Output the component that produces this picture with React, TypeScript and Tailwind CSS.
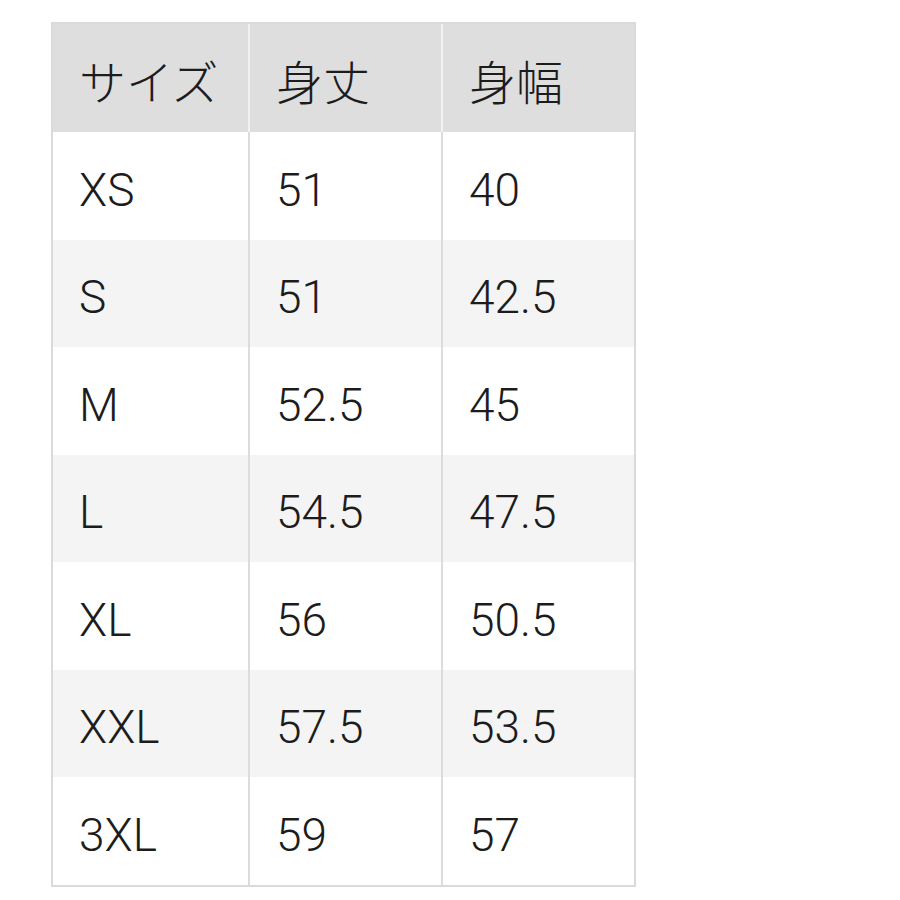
export default function App() {
  const rows: [string, string, string][] = [
    ["XS", "51", "40"],
    ["S", "51", "42.5"],
    ["M", "52.5", "45"],
    ["L", "54.5", "47.5"],
    ["XL", "56", "50.5"],
    ["XXL", "57.5", "53.5"],
    ["3XL", "59", "57"],
  ];
  const font = { fontFamily: 'Roboto, "Noto Sans CJK JP", sans-serif' };
  return (
    <div className="w-[900px] h-[900px] bg-white pt-[22px] pl-[51px]" style={font}>
      <div className="w-[585px] border-2 border-[#dadada] text-[#1c1c1c] font-light">
        <div className="grid grid-cols-[197px_193px_191px] bg-[#dedede] h-[108px]">
          <div className="flex items-center pl-[26px] pt-[12px] text-[47px] border-r-2 border-[#f2f2f2]">サイズ</div>
          <div className="flex items-center pl-[26px] pt-[12px] text-[47px] border-r-2 border-[#f2f2f2]">身丈</div>
          <div className="flex items-center pl-[26px] pt-[12px] text-[47px]">身幅</div>
        </div>
        {rows.map((r, i) => (
          <div
            key={r[0]}
            className={`grid grid-cols-[197px_193px_191px] h-[107.5px] ${i % 2 === 1 ? "bg-[#f4f4f4]" : "bg-white"}`}
          >
            {r.map((c, j) => (
              <div
                key={j}
                className={`flex items-center pl-[26px] pt-[9px] text-[46px] ${j < 2 ? "border-r-2 border-[#dcdcdc]" : ""}`}
              >
                {c}
              </div>
            ))}
          </div>
        ))}
      </div>
    </div>
  );
}
